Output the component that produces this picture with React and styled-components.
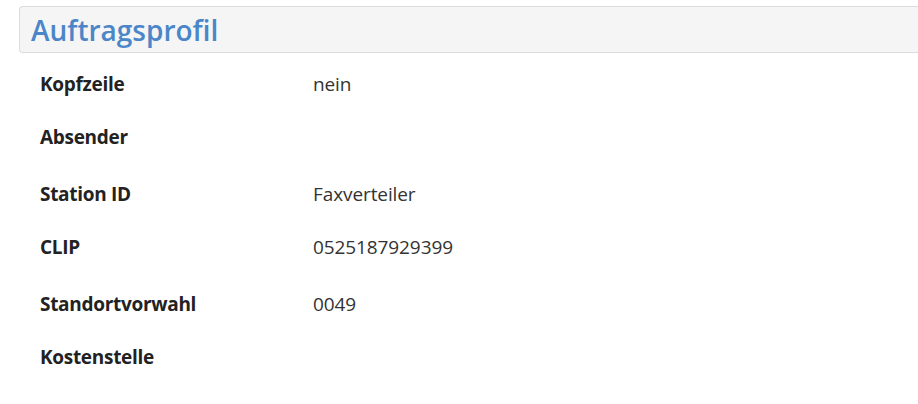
import React from 'react'
import styled, { createGlobalStyle } from 'styled-components'

const GlobalStyle = createGlobalStyle`
  html, body {
    margin: 0;
    padding: 0;
    background: #fff;
  }
  body {
    font-family: "Open Sans", "Noto Sans", "Liberation Sans", sans-serif;
    color: #333;
  }
`

const Wrapper = styled.div`
  width: 918px;
  height: 404px;
  padding: 6px 0 0 19px;
  box-sizing: border-box;
  overflow: hidden;
`

const PanelHeading = styled.div`
  background-color: #f5f5f5;
  border: 1px solid #dcdcdc;
  border-right: none;
  border-radius: 4px 0 0 4px;
  height: 47px;
  box-sizing: border-box;
  display: flex;
  align-items: center;
  padding-left: 11px;

  h2 {
    margin: 0;
    font-size: 28px;
    font-weight: 600;
    color: #4a86c8;
  }
`

const List = styled.div`
  display: flex;
  flex-direction: column;
  padding: 4px 0 0 21px;
`

const Group = styled.div`
  display: flex;
  flex-direction: column;
  margin-bottom: 4px;
`

const Row = styled.div`
  display: grid;
  grid-template-columns: 273px 1fr;
  align-items: center;
  height: 53px;
  font-size: 19px;
`

const Label = styled.div`
  font-weight: 700;
  color: #222;
  letter-spacing: -0.3px;
`

const Value = styled.div`
  color: #333;
  letter-spacing: -0.1px;
`

const rows = [
  ['Kopfzeile', 'nein'],
  ['Absender', ''],
  ['Station ID', 'Faxverteiler'],
  ['CLIP', '0525187929399'],
  ['Standortvorwahl', '0049'],
  ['Kostenstelle', ''],
]

const groups = [rows.slice(0, 2), rows.slice(2, 4), rows.slice(4, 6)]

const App = () => {
  return (
    <Wrapper>
      <GlobalStyle />
      <PanelHeading>
        <h2>Auftragsprofil</h2>
      </PanelHeading>
      <List>
        {groups.map((group, i) => (
          <Group key={i}>
            {group.map(([label, value]) => (
              <Row key={label}>
                <Label>{label}</Label>
                <Value>{value}</Value>
              </Row>
            ))}
          </Group>
        ))}
      </List>
    </Wrapper>
  )
}

export default App
